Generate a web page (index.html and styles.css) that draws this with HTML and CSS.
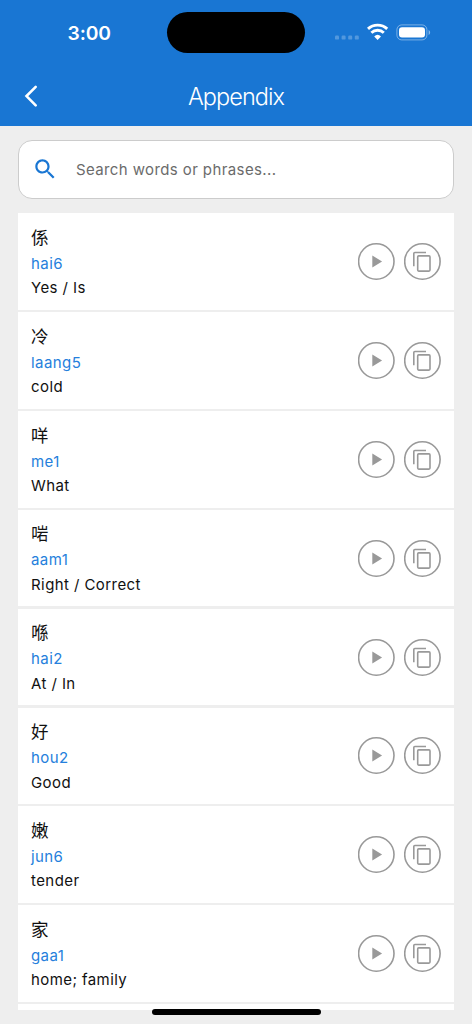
FILE: index.html
```html
<!DOCTYPE html>
<html lang="en">
<head>
<meta charset="utf-8">
<title>Appendix</title>
<link rel="stylesheet" href="styles.css">
</head>
<body>
<svg width="0" height="0" class="defs">
  <symbol id="play" viewBox="0 0 37 37"><circle cx="18.3" cy="18.5" r="17.7" fill="none" stroke="#999" stroke-width="1.6"/><path d="M14.3 12.6v11.9l9.8-5.95z" fill="#999"/></symbol>
  <symbol id="copy" viewBox="0 0 37 37"><g fill="none" stroke="#999" stroke-width="1.6"><circle cx="18.4" cy="18.5" r="17.7"/><path d="M9.8 23.2V10.6q0-1.1 1.1-1.1H22"/><rect x="13.7" y="12.9" width="12.3" height="15.2" rx="1"/></g></symbol>
</svg>
<header class="top">
  <div class="status">
    <span class="time">3:00</span>
    <span class="island"></span>
    <svg class="indicators" width="100" height="24" viewBox="0 0 100 24">
      <g fill="#fff" fill-opacity=".25"><rect x="3" y="14.6" width="4" height="4" rx="1.2"/><rect x="9.6" y="14.6" width="4" height="4" rx="1.2"/><rect x="16.2" y="14.6" width="4" height="4" rx="1.2"/><rect x="22.8" y="14.6" width="4" height="4" rx="1.2"/></g>
      <g fill="none" stroke="#fff" stroke-width="2.9"><path d="M36 7.9a14 14 0 0 1 19.2 0"/><path d="M39.4 11.8a9 9 0 0 1 12.4 0"/></g>
      <path fill="#fff" d="M45.6 18.9l-3.4-3.5a5 5 0 0 1 6.8 0z"/>
      <rect x="64.9" y="3.9" width="30" height="15" rx="4.8" fill="none" stroke="#fff" stroke-opacity=".42"/>
      <rect x="67" y="6.2" width="26" height="10.4" rx="3" fill="#fff"/>
      <path d="M96.6 9c2 .8 2 4.1 0 4.9z" fill="#fff" fill-opacity=".48"/>
    </svg>
  </div>
  <div class="bar">
    <svg class="back" width="20" height="28" viewBox="0 0 20 28"><path d="M15.7 4.8L6.5 14.1l9.2 9.3" fill="none" stroke="#fff" stroke-width="2.6" stroke-linecap="round"/></svg>
    <h1 class="title">Appendix</h1>
  </div>
</header>
<main class="page">
  <div class="search">
    <svg class="lens" width="26.4" height="26.4" viewBox="0 0 24 24"><path d="M15.5 14h-.79l-.28-.27C15.41 12.59 16 11.11 16 9.5 16 5.91 13.09 3 9.5 3S3 5.91 3 9.5 5.91 16 9.5 16c1.61 0 3.09-.59 4.23-1.57l.27.28v.79l5 4.99L20.49 19l-4.99-5zm-6 0C7.01 14 5 11.99 5 9.5S7.01 5 9.5 5 14 7.01 14 9.5 11.99 14 9.5 14z"/></svg>
    <span class="hint">Search words or phrases...</span>
  </div>
  <ul class="list">
    <li class="row"><div class="words"><span class="char">係</span><span class="roman">hai6</span><span class="gloss">Yes / Is</span></div><svg class="btn"><use href="#play"/></svg><svg class="btn"><use href="#copy"/></svg></li>
    <li class="row"><div class="words"><span class="char">冷</span><span class="roman">laang5</span><span class="gloss">cold</span></div><svg class="btn"><use href="#play"/></svg><svg class="btn"><use href="#copy"/></svg></li>
    <li class="row"><div class="words"><span class="char">咩</span><span class="roman">me1</span><span class="gloss">What</span></div><svg class="btn"><use href="#play"/></svg><svg class="btn"><use href="#copy"/></svg></li>
    <li class="row"><div class="words"><span class="char">啱</span><span class="roman">aam1</span><span class="gloss">Right / Correct</span></div><svg class="btn"><use href="#play"/></svg><svg class="btn"><use href="#copy"/></svg></li>
    <li class="row"><div class="words"><span class="char">喺</span><span class="roman">hai2</span><span class="gloss">At / In</span></div><svg class="btn"><use href="#play"/></svg><svg class="btn"><use href="#copy"/></svg></li>
    <li class="row"><div class="words"><span class="char">好</span><span class="roman">hou2</span><span class="gloss">Good</span></div><svg class="btn"><use href="#play"/></svg><svg class="btn"><use href="#copy"/></svg></li>
    <li class="row"><div class="words"><span class="char">嫩</span><span class="roman">jun6</span><span class="gloss">tender</span></div><svg class="btn"><use href="#play"/></svg><svg class="btn"><use href="#copy"/></svg></li>
    <li class="row"><div class="words"><span class="char">家</span><span class="roman">gaa1</span><span class="gloss">home; family</span></div><svg class="btn"><use href="#play"/></svg><svg class="btn"><use href="#copy"/></svg></li>
    <li class="row"></li>
  </ul>
</main>
<div class="home"></div>
</body>
</html>
```
FILE: styles.css
```css
* { box-sizing: border-box; }
body {
  margin: 0;
  height: 1024px;
  overflow: hidden;
  background: #eee;
  color: #111;
  font-family: Inter, "Noto Sans CJK SC", sans-serif;
}
.defs { position: absolute; }
.top { height: 126.4px; background: #1976d3; color: #fff; }
.status {
  height: 65px;
  display: grid;
  grid-template-columns: 167px 138px 167px;
  align-items: center;
}
.time { padding-left: 67.5px; font-size: 19.3px; font-weight: 600; letter-spacing: -.1px; line-height: 24px; }
.island { height: 41px; border-radius: 21px; background: #000; }
.indicators { margin-left: 27px; }
.bar {
  height: 61px;
  display: grid;
  grid-template-columns: 60px 1fr 60px;
  align-items: center;
}
.back { margin-left: 20px; }
.title { margin: 0; padding-top: 2px; text-align: center; font-size: 23.5px; font-weight: 300; letter-spacing: -.95px; line-height: 30px; }
.page { padding: 13.6px 18px 0; }
.search {
  height: 59px;
  display: flex;
  align-items: center;
  padding-left: 13px;
  border: 1px solid #ccc;
  border-radius: 14px;
  background: #fff;
}
.lens { fill: #1976d3; margin-bottom: 1px; }
.hint { margin-left: 17.5px; padding-top: 1px; font-size: 15px; letter-spacing: .4px; color: #6b6b6b; }
.list {
  list-style: none;
  margin: 14.4px 0 0;
  padding: 0;
  height: 797.1px;
  overflow: hidden;
}
.row {
  height: 96.5px;
  margin-bottom: 2.35px;
  padding: 0 13px;
  display: flex;
  align-items: center;
  gap: 9px;
  background: #fff;
}
.words { flex: 1; display: flex; flex-direction: column; font-size: 15px; letter-spacing: .42px; }
.char { font-size: 17.5px; line-height: 26px; padding-top: 2px; }
.roman { line-height: 24px; padding-top: 1px; color: #2580dc; }
.gloss { line-height: 24px; padding-top: .5px; }
.btn { width: 37px; height: 37px; }
.home {
  position: absolute;
  left: 151.5px;
  top: 1009px;
  width: 169px;
  height: 6px;
  border-radius: 3px;
  background: #000;
}
```
